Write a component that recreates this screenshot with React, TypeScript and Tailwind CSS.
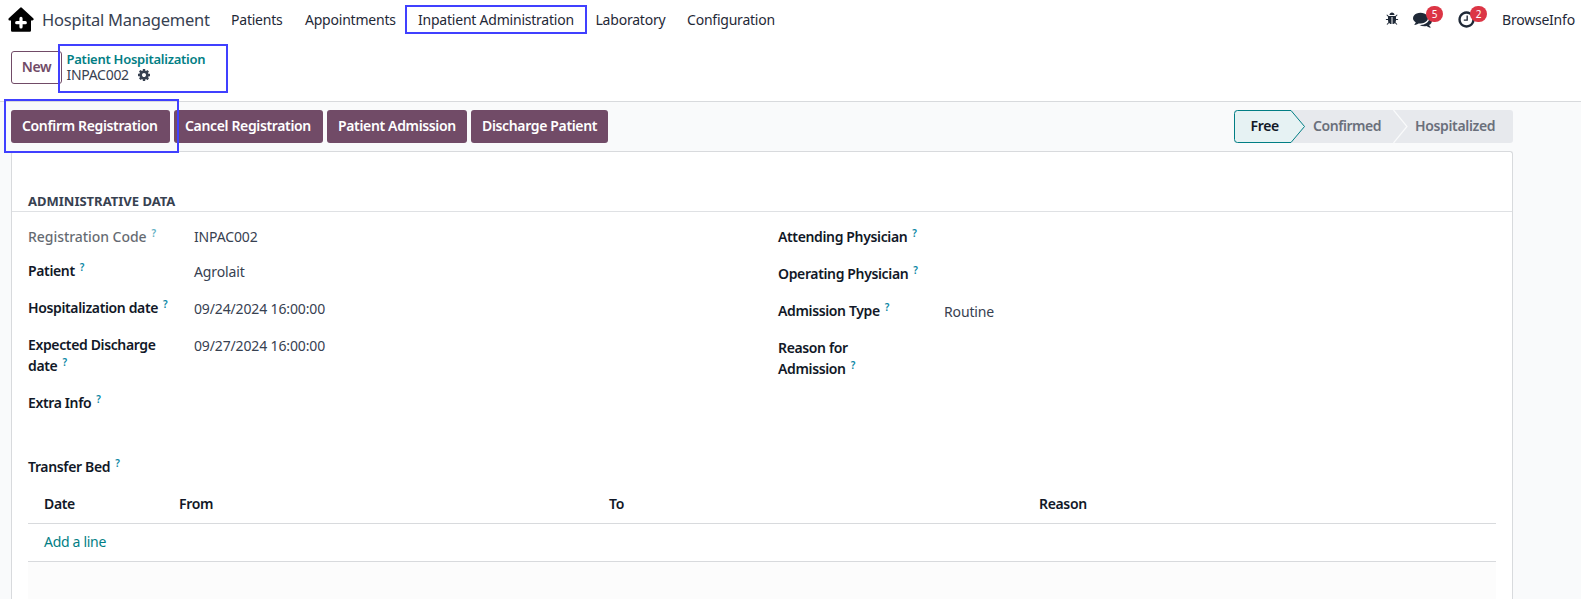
import type { ReactNode } from "react";

const NAV = [
  { label: "Patients", width: "w-[74px]" },
  { label: "Appointments", width: "w-[113px]" },
  { label: "Inpatient Administration", width: "w-[177.5px]" },
  { label: "Laboratory", width: "w-[91.5px]" },
  { label: "Configuration", width: "w-[100px]" },
];

function Icon({ d, className }: { d: string; className: string }) {
  return (
    <svg viewBox="0 0 1792 1792" fill="currentColor" className={className}>
      <path d={d} />
    </svg>
  );
}

const BUG =
  "M1696 960q0 26-19 45t-45 19h-224q0 171-67 290l208 209q19 19 19 45t-19 45q-18 19-45 19t-45-19l-198-197q-5 5-15 13t-42 28.500-65 36.500-82 29-97 13v-896h-128v896q-51 0-101.500-13.500t-87-33-66-39-43.500-32.500l-15-14-183 207q-20 21-48 21-24 0-43-16-19-18-20.500-44.500t15.500-46.500l202-227q-58-114-58-274h-224q-26 0-45-19t-19-45 19-45 45-19h224v-294l-173-173q-19-19-19-45t19-45 45-19 45 19l173 173h844l173-173q19-19 45-19t45 19 19 45-19 45l-173 173v294h224q26 0 45 19t19 45zm-480-576h-640q0-133 93.500-226.500t226.500-93.500 226.500 93.500 93.500 226.500z";
const COMMENTS =
  "M1408 768q0 139-94 257t-256.500 186.500-353.500 68.500q-86 0-176-16-124 88-278 128-36 9-86 16h-3q-11 0-20.500-8t-11.500-21q-1-3-1-6.500t.5-6.500 2-6l2.500-5 3.500-5.500 4-5 4.500-5 4-4.500q5-6 23-25t26-29.500 22.500-29 25-38.500 20.500-44q-124-72-195-177t-71-224q0-139 94-257t256.500-186.500 353.500-68.500 353.500 68.500 256.500 186.500 94 257zm384 256q0 120-71 224.500t-195 176.500q10 24 20.500 44t25 38.500 22.500 29 26 29.500 23 25q1 1 4 4.500t4.500 5 4 5 3.500 5.500l2.500 5 2 6 .5 6.500-1 6.500q-3 14-13 22t-22 7q-50-7-86-16-154-40-278-128-90 16-176 16-271 0-472-132 58 4 88 4 161 0 309-45t264-129q125-92 192-212t67-254q0-77-23-152 129 71 204 178t75 230z";
const CLOCK =
  "M1024 544v448q0 14-9 23t-23 9h-320q-14 0-23-9t-9-23v-64q0-14 9-23t23-9h224v-352q0-14 9-23t23-9h64q14 0 23 9t9 23zm416 352q0-148-73-273t-198-198-273-73-273 73-198 198-73 273 73 273 198 198 273 73 273-73 198-198 73-273zm224 0q0 209-103 385.500t-279.500 279.500-385.500 103-385.500-103-279.500-279.500-103-385.500 103-385.500 279.500-279.500 385.500-103 385.500 103 279.500 279.500 103 385.500z";
const COG =
  "M1152 896q0-106-75-181t-181-75-181 75-75 181 75 181 181 75 181-75 75-181zm512-109v222q0 12-8 23t-20 13l-185 28q-19 54-39 91 35 50 107 138 10 12 10 25t-9 23q-27 37-99 108t-94 71q-12 0-26-9l-138-108q-44 23-91 38-16 136-29 186-7 28-36 28h-222q-14 0-24.500-8.500t-11.500-21.500l-28-184q-49-16-90-37l-141 107q-10 9-25 9-14 0-25-11-126-114-165-168-7-10-7-23 0-12 8-23 15-21 51-66.500t54-70.500q-27-50-41-99l-183-27q-13-2-21-12.500t-8-23.500v-222q0-12 8-23t19-13l186-28q14-46 39-92-40-57-107-138-10-12-10-24 0-10 9-23 26-36 98.500-107.500t94.500-71.500q13 0 26 10l138 107q44-23 91-38 16-136 29-186 7-28 36-28h222q14 0 24.500 8.500t11.500 21.500l28 184q49 16 90 37l142-107q9-9 24-9 13 0 25 10 129 119 165 170 7 8 7 22 0 12-8 23-15 21-51 66.500t-54 70.500q26 50 41 98l183 28q13 2 21 12.500t8 23.500z";

function Highlight({ className }: { className: string }) {
  return <div className={`pointer-events-none absolute z-10 border-2 border-[#4040ff] ${className}`} />;
}

function Badge({ children }: { children: ReactNode }) {
  return (
    <span className="absolute -top-[4px] left-[13px] flex h-[16px] w-[17px] items-center justify-center rounded-full bg-[#dc3545] text-[10px] leading-none text-white">
      {children}
    </span>
  );
}

function Primary({ children, className }: { children: ReactNode; className: string }) {
  return (
    <button
      className={`h-[33px] rounded-[3px] bg-[#714b67] pb-[2px] pl-[11px] text-left font-semibold tracking-[-0.35px] whitespace-nowrap text-white ${className}`}
    >
      {children}
    </button>
  );
}

function Help() {
  return <span className="relative -top-[5px] ml-[5px] text-[10px] leading-none font-semibold text-[#0a87a5]">?</span>;
}

type FieldProps = {
  label: ReactNode;
  value?: string;
  height: string;
  muted?: boolean;
};

function Field({ label, value, height, muted }: FieldProps) {
  return (
    <div className={`flex ${height}`}>
      <div
        className={`w-[166px] whitespace-nowrap text-[#111827] ${muted ? "font-medium tracking-[-0.05px] opacity-65" : "font-semibold tracking-[-0.36px]"}`}
      >
        {label}
        <Help />
      </div>
      <div className={`tracking-[-0.14px] text-[#374151] ${muted ? "" : "pt-px"}`}>{value}</div>
    </div>
  );
}

export default function App() {
  return (
    <div className="relative flex h-[599px] w-[1581px] flex-col overflow-hidden bg-white font-['Noto_Sans',sans-serif] text-[14px] leading-[21px] tracking-[-0.35px] text-[#1f2937]">
      <header className="flex h-[40px] shrink-0 items-center pb-[2px] pl-[8px]">
        <svg viewBox="0 0 26 26" className="mt-[2px] h-[26px] w-[26px]">
          <path
            d="M13 1.600 24.400 12.200H21.800V23.500H4.200V12.200H1.600Z"
            fill="#000"
            stroke="#000"
            strokeWidth="2.400"
            strokeLinejoin="round"
          />
          <path d="M13 11.400v8.600M8.700 15.700h8.600" stroke="#fff" strokeWidth="3.200" strokeLinecap="round" />
        </svg>
        <div className="ml-[8px] w-[189px] text-[16.500px] tracking-[-0.24px] whitespace-nowrap text-[#374151]">
          Hospital Management
        </div>
        <nav className="flex tracking-[-0.22px] whitespace-nowrap">
          {NAV.map((item) => (
            <a key={item.label} className={item.width}>
              {item.label}
            </a>
          ))}
        </nav>
        <div className="ml-auto flex items-center pr-[6px]">
          <Icon d={BUG} className="h-[14px] w-[14px]" />
          <div className="relative ml-[14px]">
            <Icon d={COMMENTS} className="h-[19px] w-[19px]" />
            <Badge>5</Badge>
          </div>
          <div className="relative ml-[25px]">
            <Icon d={CLOCK} className="h-[19px] w-[19px]" />
            <Badge>2</Badge>
          </div>
          <span className="ml-[26px] w-[73px] tracking-[-0.22px] whitespace-nowrap">BrowseInfo</span>
        </div>
      </header>

      <div className="flex h-[62px] shrink-0 border-b border-[#d8dadd] pt-[11px] pl-[11px]">
        <button className="h-[33px] w-[51px] rounded-[3px] border border-[#714b67] pb-[2px] font-semibold text-[#714b67]">
          New
        </button>
        <div className="flex flex-col pl-[4.500px]">
          <a className="text-[13px] leading-[16px] font-semibold tracking-[-0.25px] text-[#017e84]">
            Patient Hospitalization
          </a>
          <div className="flex items-center leading-[16px] tracking-[-0.3px] text-[#374151]">
            INPAC002
            <Icon d={COG} className="ml-[8px] h-[14px] w-[14px]" />
          </div>
        </div>
      </div>

      <main className="flex min-h-0 flex-1 flex-col bg-[#f9fafb] pl-[11px]">
        <div className="flex h-[49px] w-[1502px] shrink-0 gap-[4px] pt-[8px]">
          <Primary className="w-[159px]">Confirm Registration</Primary>
          <Primary className="w-[149px]">Cancel Registration</Primary>
          <Primary className="w-[140px]">Patient Admission</Primary>
          <Primary className="w-[137px]">Discharge Patient</Primary>
          <div className="relative ml-auto flex h-[33px] w-[279px] rounded-[3px] bg-[#e7e9ed] leading-[32px] font-semibold text-[#6a6f7b]">
            <svg viewBox="0 0 279 33" fill="none" className="absolute inset-0 h-[33px] w-[279px]">
              <path
                d="M3.500 .5H57L70.500 16.500 57 32.500H3.500a3 3 0 0 1-3-3V3.500a3 3 0 0 1 3-3Z"
                fill="#e6f2f3"
                stroke="#017e84"
              />
              <path d="M159.500 0 173 16.500 159.500 33" stroke="#f9fafb" strokeWidth="1.200" />
            </svg>
            <span className="relative w-[79px] pl-[16.500px] text-[#111827]">Free</span>
            <span className="relative w-[102px] tracking-[-0.45px]">Confirmed</span>
            <span className="relative">Hospitalized</span>
          </div>
        </div>

        <section className="flex min-h-0 w-[1502px] flex-1 flex-col rounded-t-[3px] border border-b-0 border-[#d8dadd] bg-white">
          <h2 className="h-[60px] shrink-0 border-b border-[#dfe1e4] pt-[39px] pl-[16px] text-[13px] leading-[20px] font-bold tracking-[0px] text-[#374151]">
            ADMINISTRATIVE DATA
          </h2>
          <div className="flex h-[244px] shrink-0 pt-[14px] pl-[16px]">
            <div className="w-[750px]">
              <Field label="Registration Code" value="INPAC002" height="h-[34px]" muted />
              <Field label="Patient" value="Agrolait" height="h-[37px]" />
              <Field label="Hospitalization date" value="09/24/2024 16:00:00" height="h-[37px]" />
              <Field
                label={
                  <>
                    Expected Discharge
                    <br />
                    date
                  </>
                }
                value="09/27/2024 16:00:00"
                height="h-[58px]"
              />
              <Field label="Extra Info" height="h-[37px]" />
            </div>
            <div>
              <Field label="Attending Physician" height="h-[37px]" />
              <Field label="Operating Physician" height="h-[37px]" />
              <Field label="Admission Type" value="Routine" height="h-[37px]" />
              <Field
                label={
                  <>
                    Reason for
                    <br />
                    Admission
                  </>
                }
                height="h-[58px]"
              />
            </div>
          </div>

          <div className="flex min-h-0 flex-1 flex-col px-[16px]">
            <div className="h-[30px] shrink-0 font-semibold text-[#111827]">
              Transfer Bed
              <Help />
            </div>
            <div className="grid h-[38px] shrink-0 grid-cols-[135px_430px_430px_1fr] border-b border-[#d8dadd] pt-[7px] pl-[16px] font-semibold text-[#111827]">
              <span>Date</span>
              <span>From</span>
              <span>To</span>
              <span>Reason</span>
            </div>
            <div className="h-[38px] shrink-0 border-b border-[#d8dadd] pt-[7px] pl-[16px] tracking-[-0.3px] text-[#017e84]">
              Add a line
            </div>
            <div className="flex-1 bg-[#fcfcfc]" />
          </div>
        </section>
      </main>

      <Highlight className="top-[5px] left-[405px] h-[29px] w-[182px]" />
      <Highlight className="top-[44px] left-[58px] h-[49px] w-[170px]" />
      <Highlight className="top-[99px] left-[4px] h-[54px] w-[175px]" />
    </div>
  );
}
